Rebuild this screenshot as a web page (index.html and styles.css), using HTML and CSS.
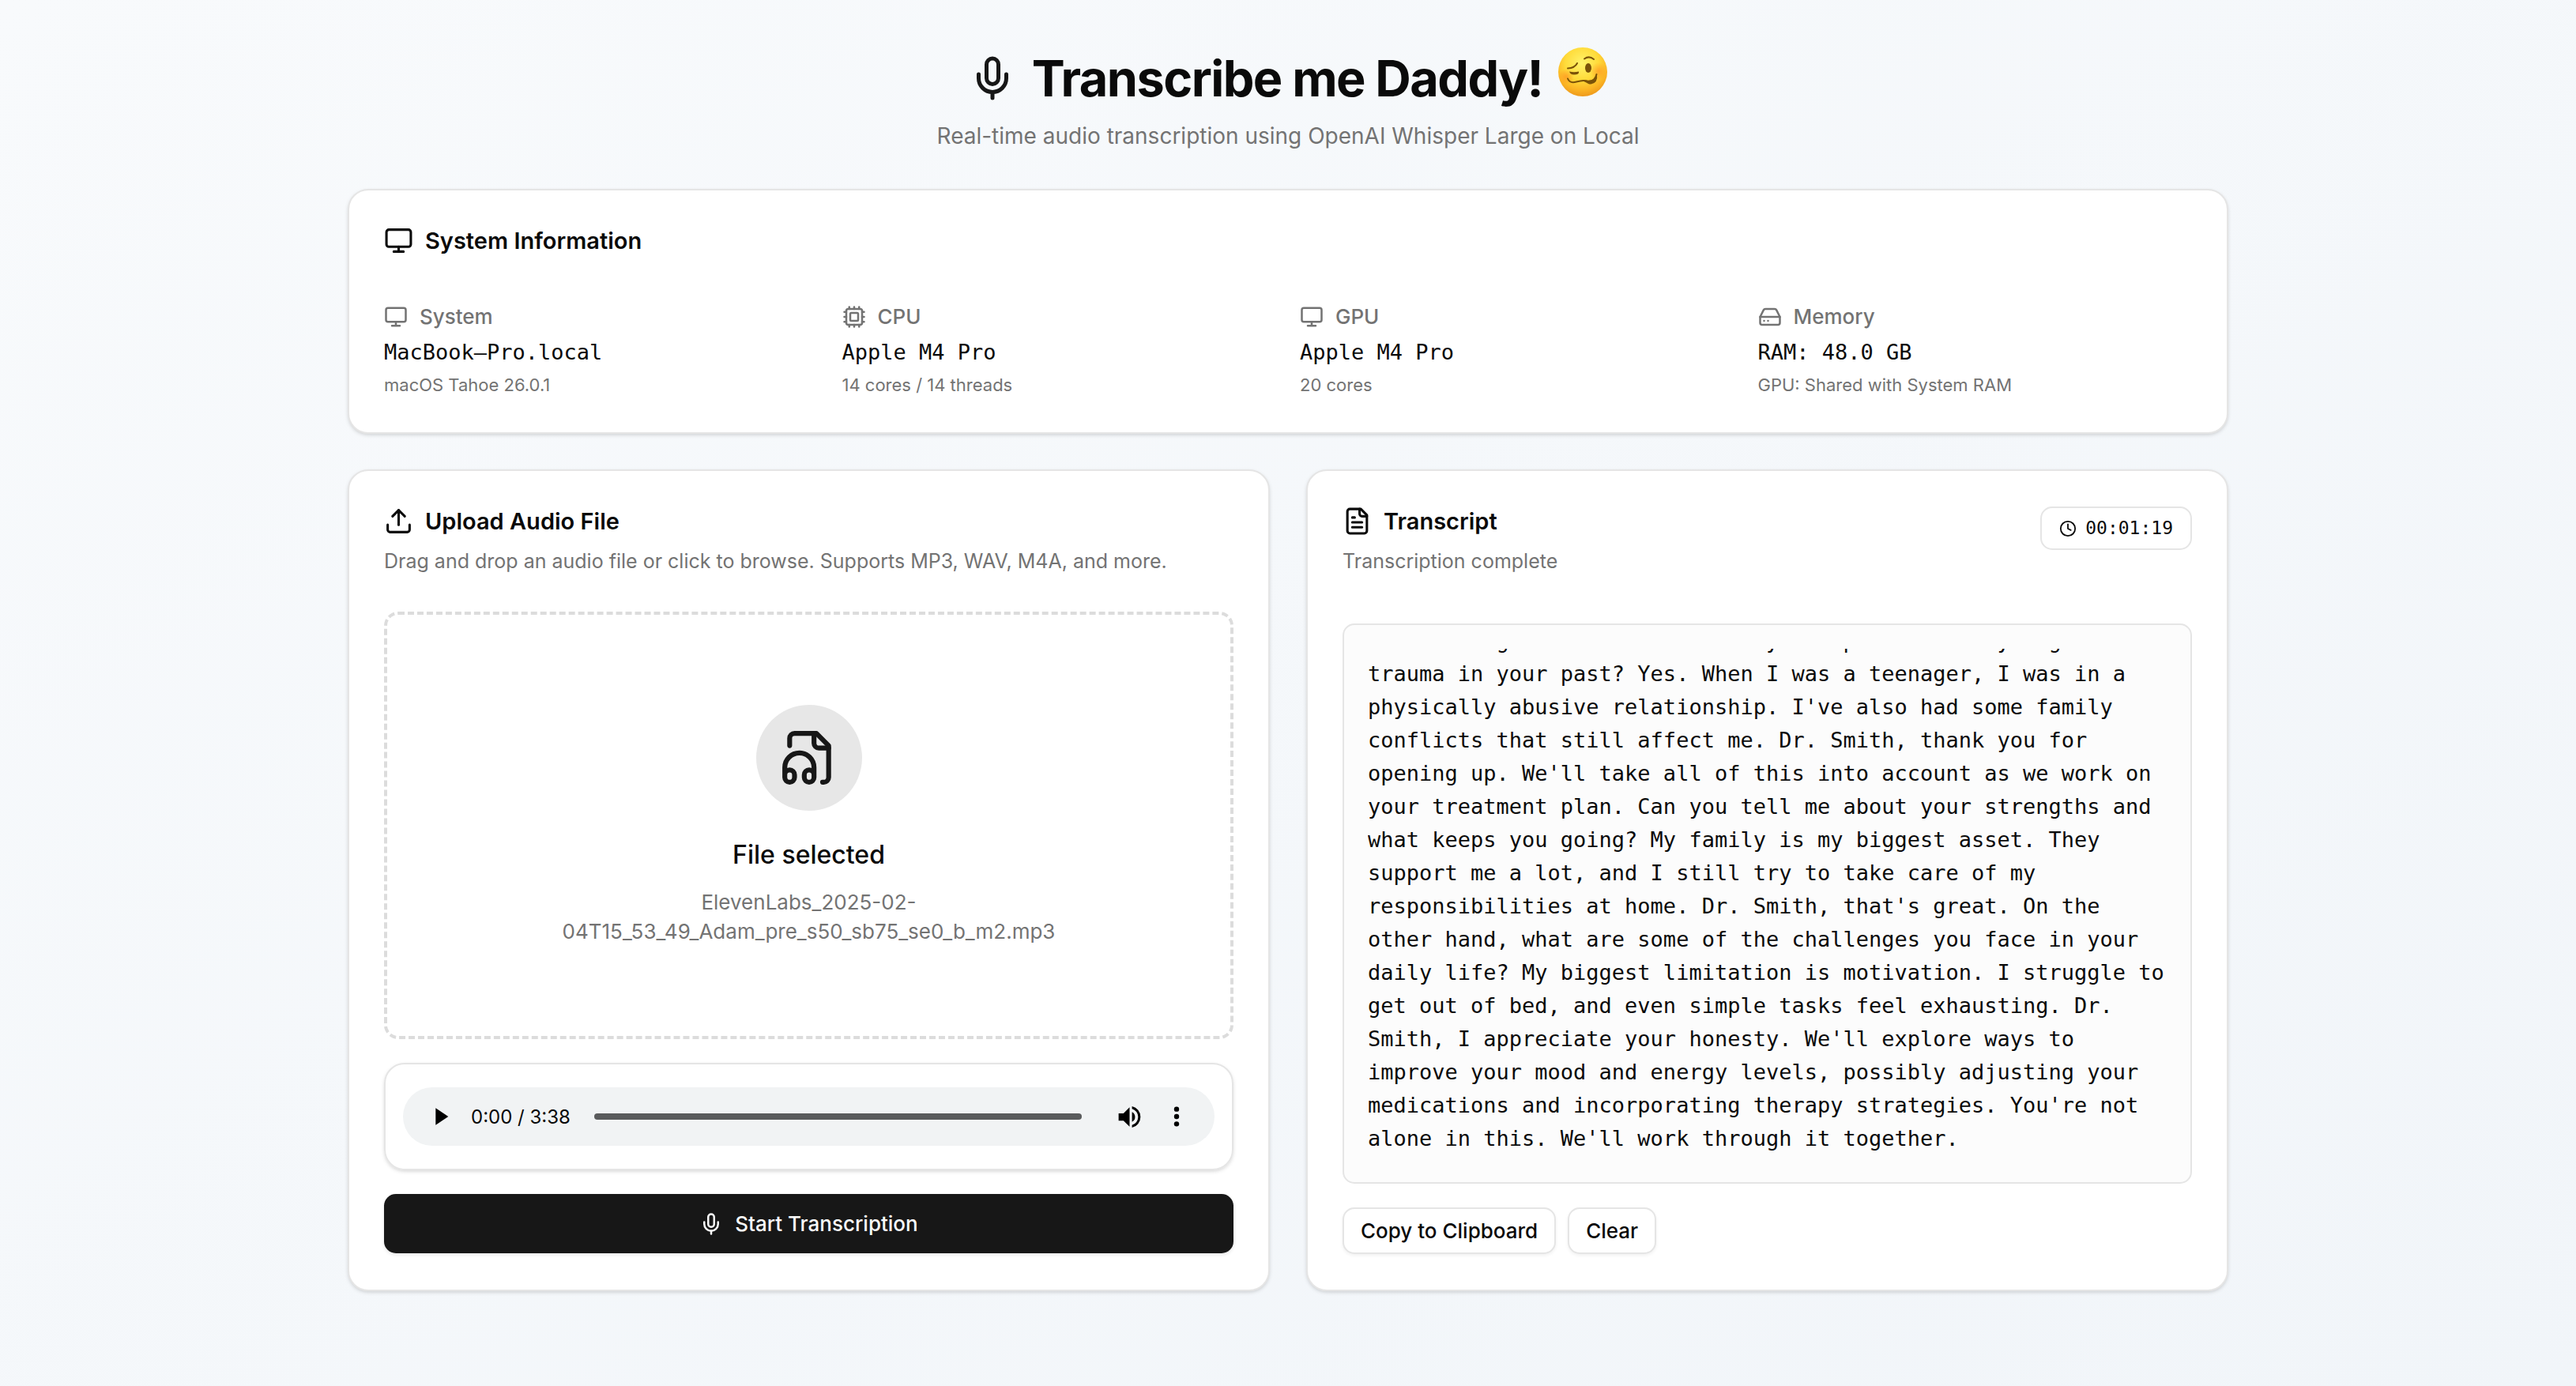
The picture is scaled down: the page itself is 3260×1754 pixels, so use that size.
FILE: index.html
```html
<!DOCTYPE html>
<html lang="en">
<head>
<meta charset="utf-8">
<meta name="viewport" content="width=device-width, initial-scale=1">
<title>Transcribe me Daddy!</title>
<link rel="stylesheet" href="styles.css">
</head>
<body>
<svg class="sprite" aria-hidden="true">
  <symbol id="mic" viewBox="0 0 24 24"><path d="M12 19v3"/><path d="M19 10v2a7 7 0 0 1-14 0v-2"/><rect x="9" y="2" width="6" height="13" rx="3"/></symbol>
  <symbol id="monitor" viewBox="0 0 24 24"><rect width="20" height="14" x="2" y="3" rx="2"/><path d="M8 21h8M12 17v4"/></symbol>
  <symbol id="cpu" viewBox="0 0 24 24"><path d="M12 20v2M12 2v2M17 20v2M17 2v2M2 12h2M2 17h2M2 7h2M20 12h2M20 17h2M20 7h2M7 20v2M7 2v2"/><rect x="4" y="4" width="16" height="16" rx="2"/><rect x="8" y="8" width="8" height="8" rx="1"/></symbol>
  <symbol id="drive" viewBox="0 0 24 24"><path d="M22 12H2"/><path d="M5.45 5.11 2 12v6a2 2 0 0 0 2 2h16a2 2 0 0 0 2-2v-6l-3.45-6.89A2 2 0 0 0 16.76 4H7.24a2 2 0 0 0-1.79 1.11z"/><path d="M6 16h.01M10 16h.01"/></symbol>
  <symbol id="upload" viewBox="0 0 24 24"><path d="M12 3v12"/><path d="m17 8-5-5-5 5"/><path d="M21 15v4a2 2 0 0 1-2 2H5a2 2 0 0 1-2-2v-4"/></symbol>
  <symbol id="file-text" viewBox="0 0 24 24"><path d="M15 2H6a2 2 0 0 0-2 2v16a2 2 0 0 0 2 2h12a2 2 0 0 0 2-2V7Z"/><path d="M14 2v4a2 2 0 0 0 2 2h4"/><path d="M10 9H8M16 13H8M16 17H8"/></symbol>
  <symbol id="file-audio" viewBox="0 0 24 24"><path d="M17.5 22h.5a2 2 0 0 0 2-2V7l-5-5H6a2 2 0 0 0-2 2v3"/><path d="M14 2v4a2 2 0 0 0 2 2h4"/><path d="M2 19a2 2 0 1 1 4 0v1a2 2 0 1 1-4 0v-4a6 6 0 0 1 12 0v4a2 2 0 1 1-4 0v-1a2 2 0 1 1 4 0"/></symbol>
  <symbol id="clock" viewBox="0 0 24 24"><circle cx="12" cy="12" r="10"/><path d="M12 6v6l4 2"/></symbol>
</svg>

<main class="page">
  <header class="hero">
    <div class="hero-row">
      <svg class="icon icon-xl"><use href="#mic"/></svg>
      <h1>Transcribe me Daddy!</h1>
      <svg class="emoji" viewBox="0 0 62 62" role="img" aria-label="Woozy face">
        <defs>
          <radialGradient id="face" cx="48%" cy="32%" r="68%">
            <stop offset="0" stop-color="#fff36a"/><stop offset=".5" stop-color="#ffdb3a"/><stop offset=".8" stop-color="#fbb524"/><stop offset="1" stop-color="#ee9a1c"/>
          </radialGradient>
          <radialGradient id="blush"><stop offset="0" stop-color="#ff8a1f" stop-opacity=".6"/><stop offset="1" stop-color="#ff8a1f" stop-opacity="0"/></radialGradient>
        </defs>
        <circle cx="31" cy="31" r="31" fill="url(#face)"/>
        <circle cx="10" cy="37" r="10" fill="url(#blush)"/>
        <circle cx="51" cy="30" r="11" fill="url(#blush)"/>
        <g fill="none" stroke="#7a5208" stroke-linecap="round" stroke-linejoin="round" stroke-width="2">
          <path d="M12 26.500q9-.5 12-6.500"/>
          <path d="M33 14.500q6-4.500 12 .5"/>
          <path d="M12 39.500c2 5 6 5.500 11 4s9-2.500 13-1c6 1 11-1.500 12.500-8.500"/>
        </g>
        <path d="M29 42q5-1.500 9 0 8 0 11-8 1.500 11-7.500 12.500c-4 .5-7-3.500-12.500-4.500z" fill="#7a5208"/>
        <path d="M14 30.500q6 1.500 12 0 1 4-6 4-5 0-6-4z" fill="#7a5208"/>
        <ellipse cx="38" cy="26" rx="4" ry="6" fill="#7a5208"/>
      </svg>
    </div>
    <p class="tagline">Real-time audio transcription using OpenAI Whisper Large on Local</p>
  </header>

  <section class="card system">
    <h2 class="card-title"><svg class="icon icon-lg"><use href="#monitor"/></svg>System Information</h2>
    <div class="specs">
      <div class="spec">
        <h3><svg class="icon icon-md"><use href="#monitor"/></svg>System</h3>
        <p class="mono">MacBook–Pro.local</p>
        <p class="note">macOS Tahoe 26.0.1</p>
      </div>
      <div class="spec">
        <h3><svg class="icon icon-md"><use href="#cpu"/></svg>CPU</h3>
        <p class="mono">Apple M4 Pro</p>
        <p class="note">14 cores / 14 threads</p>
      </div>
      <div class="spec">
        <h3><svg class="icon icon-md"><use href="#monitor"/></svg>GPU</h3>
        <p class="mono">Apple M4 Pro</p>
        <p class="note">20 cores</p>
      </div>
      <div class="spec">
        <h3><svg class="icon icon-md"><use href="#drive"/></svg>Memory</h3>
        <p class="mono">RAM: 48.0 GB</p>
        <p class="note">GPU: Shared with System RAM</p>
      </div>
    </div>
  </section>

  <div class="columns">
    <section class="card upload">
      <div class="card-head">
        <h2 class="card-title"><svg class="icon icon-lg"><use href="#upload"/></svg>Upload Audio File</h2>
        <p class="card-desc">Drag and drop an audio file or click to browse. Supports MP3, WAV, M4A, and more.</p>
      </div>
      <button class="dropzone" type="button">
        <span class="drop-icon"><svg class="icon icon-2xl"><use href="#file-audio"/></svg></span>
        <span class="drop-title">File selected</span>
        <span class="drop-file">ElevenLabs_2025-02-04T15_53_49_Adam_pre_s50_sb75_se0_b_m2.mp3</span>
      </button>
      <div class="player-card">
        <div class="player">
          <button class="player-btn" type="button" aria-label="Play"><svg viewBox="0 0 24 24"><path d="M7 4v16l12-8z"/></svg></button>
          <span class="time">0:00 / 3:38</span>
          <input class="seek" type="range" min="0" max="218" value="0" aria-label="Seek">
          <button class="player-btn" type="button" aria-label="Mute"><svg class="volume" viewBox="0 0 24 24"><path d="M3 9v6h4l5 5V4L7 9H3zm13.500 3A4.500 4.500 0 0 0 14 7.970v8.050A4.470 4.470 0 0 0 16.500 12zM14 3.230v2.060a7 7 0 0 1 0 13.420v2.060a9 9 0 0 0 0-17.540z"/></svg></button>
          <button class="player-btn" type="button" aria-label="More options"><svg viewBox="0 0 24 24"><circle cx="12" cy="5" r="2.400"/><circle cx="12" cy="12" r="2.400"/><circle cx="12" cy="19" r="2.400"/></svg></button>
        </div>
      </div>
      <button class="btn-primary" type="button"><svg class="icon icon-md"><use href="#mic"/></svg>Start Transcription</button>
    </section>

    <section class="card transcript">
      <div class="transcript-head">
        <div class="card-head">
          <h2 class="card-title"><svg class="icon icon-lg"><use href="#file-text"/></svg>Transcript</h2>
          <p class="card-desc">Transcription complete</p>
        </div>
        <span class="badge"><svg class="icon icon-sm"><use href="#clock"/></svg>00:01:19</span>
      </div>
      <div class="log">
        <div class="log-view">
          <p>them from growth at home. Have you experienced any significant trauma in your past? Yes. When I was a teenager, I was in a physically abusive relationship. I've also had some family conflicts that still affect me. Dr. Smith, thank you for opening up. We'll take all of this into account as we work on your treatment plan. Can you tell me about your strengths and what keeps you going? My family is my biggest asset. They support me a lot, and I still try to take care of my responsibilities at home. Dr. Smith, that's great. On the other hand, what are some of the challenges you face in your daily life? My biggest limitation is motivation. I struggle to get out of bed, and even simple tasks feel exhausting. Dr. Smith, I appreciate your honesty. We'll explore ways to improve your mood and energy levels, possibly adjusting your medications and incorporating therapy strategies. You're not alone in this. We'll work through it together.</p>
        </div>
      </div>
      <div class="actions">
        <button class="btn" type="button">Copy to Clipboard</button>
        <button class="btn" type="button">Clear</button>
      </div>
    </section>
  </div>
</main>
</body>
</html>
```
FILE: styles.css
```css
:root {
  --ink: #0a0a0a;
  --primary: #171717;
  --muted: #737373;
  --line: #e5e5e5;
  --sans: Inter, "Liberation Sans", sans-serif;
  --mono: "DejaVu Sans Mono", "Liberation Mono", monospace;
  --shadow: 0 2px 5px rgba(0, 0, 0, .1), 0 2px 4px -2px rgba(0, 0, 0, .1);
}

* { box-sizing: border-box; }

body {
  margin: 0;
  min-height: 100vh;
  background: linear-gradient(to bottom right, #f8fafc, #f1f5f9);
  color: var(--ink);
  font-family: var(--sans);
  font-size: 26px;
  line-height: 37px;
}

h1, h2, h3, p { margin: 0; }
button { font: inherit; color: inherit; cursor: pointer; }

.sprite { display: none; }

.icon {
  flex: none;
  fill: none;
  stroke: currentColor;
  stroke-width: 2;
  stroke-linecap: round;
  stroke-linejoin: round;
}
.icon-sm { width: 22px; height: 22px; }
.icon-md { width: 30px; height: 30px; }
.icon-lg { width: 37px; height: 37px; }
.icon-xl { width: 60px; height: 60px; color: var(--primary); }
.icon-2xl { width: 74px; height: 74px; }

.page {
  display: flex;
  flex-direction: column;
  gap: 45px;
  max-width: 2380px;
  margin: 0 auto;
  padding: 60px 0;
}

.hero {
  display: flex;
  flex-direction: column;
  align-items: center;
  gap: 14px;
}
.hero-row { display: flex; align-items: center; gap: 20px; }
h1 {
  font-size: 63px;
  line-height: 74px;
  font-weight: 700;
  letter-spacing: -0.025em;
}
.emoji { width: 62px; height: 62px; margin-bottom: 15px; }
.tagline { font-size: 28px; line-height: 43px; color: var(--muted); }

.card {
  display: flex;
  flex-direction: column;
  padding: 45px 44px;
  background: #fff;
  border: 2px solid var(--line);
  border-radius: 26px;
  box-shadow: var(--shadow);
}
.card-title {
  display: flex;
  align-items: center;
  gap: 15px;
  font-size: 29px;
  line-height: 37px;
  font-weight: 600;
}
.card-head { display: flex; flex-direction: column; gap: 14px; }
.card-desc { font-size: 25px; color: var(--muted); }

.system { gap: 59px; }
.specs { display: grid; grid-template-columns: repeat(4, 1fr); gap: 30px; }
.spec { display: flex; flex-direction: column; gap: 8px; }
.spec h3 {
  display: flex;
  align-items: center;
  gap: 15px;
  font-size: 26px;
  font-weight: 500;
  color: var(--muted);
}
.mono { font-family: var(--mono); font-size: 27px; }
.note { font-size: 22px; line-height: 30px; color: var(--muted); }

.columns { display: grid; grid-template-columns: 1fr 1fr; gap: 46px; }

.upload { gap: 30px; }
.upload .card-head { margin-bottom: 15px; }
.dropzone {
  display: flex;
  flex-direction: column;
  align-items: center;
  padding: 114px 45px;
  background: none;
  border: 4px dashed #dcdcdc;
  border-radius: 18px;
}
.drop-icon {
  display: grid;
  place-items: center;
  width: 134px;
  height: 134px;
  margin-bottom: 30px;
  border-radius: 50%;
  background: #e7e7e7;
  color: var(--primary);
}
.drop-title { margin-bottom: 15px; font-size: 32px; line-height: 52px; font-weight: 500; }
.drop-file { max-width: 714px; color: var(--muted); }

.player-card {
  padding: 29px 22px;
  border: 2px solid var(--line);
  border-radius: 26px;
  box-shadow: var(--shadow);
}
.player {
  display: flex;
  align-items: center;
  height: 74px;
  padding: 0 18px;
  border-radius: 37px;
  background: #f1f3f4;
}
.player-btn {
  display: grid;
  place-items: center;
  width: 60px;
  height: 60px;
  padding: 0;
  border: 0;
  background: none;
}
.player-btn svg { width: 32px; height: 32px; fill: #000; }
.player-btn .volume { width: 37px; height: 37px; }
.time { margin: 0 30px 0 8px; font-size: 24px; }
.seek {
  flex: 1;
  min-width: 0;
  height: 8px;
  margin: 0 30px 0 0;
  border-radius: 4px;
  background: #5a5b5c;
  appearance: none;
}
.seek::-webkit-slider-thumb { appearance: none; width: 0; height: 0; }

.btn-primary {
  display: flex;
  align-items: center;
  justify-content: center;
  gap: 15px;
  height: 75px;
  border: 0;
  border-radius: 15px;
  background: var(--primary);
  color: #fafafa;
  font-weight: 500;
  box-shadow: 0 2px 4px rgba(0, 0, 0, .1);
}

.transcript { gap: 30px; }
.transcript-head {
  display: flex;
  align-items: flex-start;
  justify-content: space-between;
  margin-bottom: 30px;
}
.badge {
  display: flex;
  align-items: center;
  gap: 11px;
  height: 55px;
  padding: 0 22px;
  border: 2px solid var(--line);
  border-radius: 15px;
  font-family: var(--mono);
  font-size: 23px;
}
.log {
  display: flex;
  height: 709px;
  padding: 30px 24px 34px 30px;
  border: 2px solid var(--line);
  border-radius: 15px;
  background: #fcfcfc;
}
.log-view {
  display: flex;
  flex-direction: column;
  justify-content: flex-end;
  overflow: hidden;
  font-family: var(--mono);
  font-size: 27px;
  line-height: 42px;
}
.actions { display: flex; gap: 15px; }
.btn {
  height: 59px;
  padding: 0 21px;
  border: 2px solid var(--line);
  border-radius: 15px;
  background: #fff;
  font-weight: 500;
  box-shadow: 0 2px 4px rgba(0, 0, 0, .06);
}
```
